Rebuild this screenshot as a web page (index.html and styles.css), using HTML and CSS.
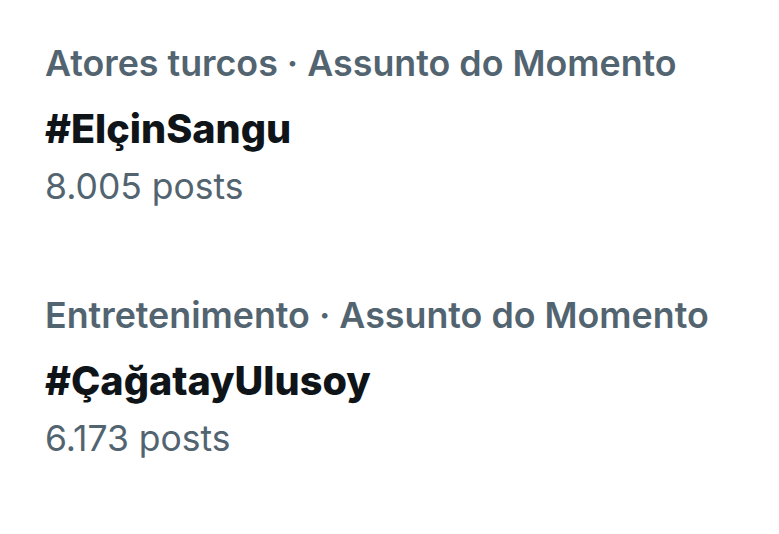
FILE: index.html
```html
<!DOCTYPE html>
<html lang="pt">
<head>
<meta charset="utf-8">
<link rel="stylesheet" href="styles.css">
</head>
<body>
<div class="list">
  <div class="trend">
    <div class="cat">Atores turcos · Assunto do Momento</div>
    <div class="tag">#ElçinSangu</div>
    <div class="count">8.005 posts</div>
  </div>
  <div class="trend">
    <div class="cat">Entretenimento · Assunto do Momento</div>
    <div class="tag">#ÇağatayUlusoy</div>
    <div class="count">6.173 posts</div>
  </div>
</div>
</body>
</html>
```

FILE: styles.css
```css
html, body {
  margin: 0;
  background: #ffffff;
}
body {
  font-family: Inter, Roboto, "Noto Sans", sans-serif;
  width: 779px;
  height: 534px;
  overflow: hidden;
}
.list {
  display: flex;
  flex-direction: column;
  gap: 80px;
  padding: 39px 0 0 45px;
}
.trend {
  display: flex;
  flex-direction: column;
}
.cat {
  font-size: 35.8px;
  line-height: 48px;
  font-weight: 600;
  color: #536471;
}
.tag {
  margin-top: 16px;
  font-size: 39.6px;
  line-height: 52px;
  font-weight: 800;
  color: #0f1419;
}
.count {
  margin-top: 8px;
  font-size: 35.5px;
  line-height: 48px;
  font-weight: 400;
  color: #536471;
}
```
